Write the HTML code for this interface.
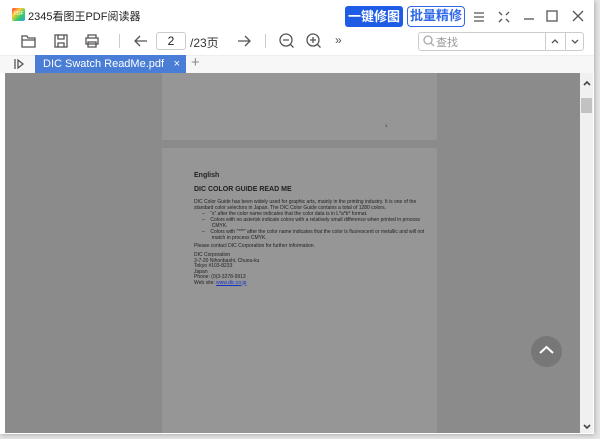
<!DOCTYPE html><html><head><style>
*{margin:0;padding:0;box-sizing:border-box}
body{width:600px;height:439px;background:#e6e6e6;font-family:"Liberation Sans","Noto Sans CJK SC",sans-serif;position:relative;overflow:hidden}
.win{position:absolute;left:0;top:0;width:594px;height:434px;background:#fff;box-shadow:1px 1px 5px rgba(0,0,0,.25)}
.a{position:absolute}
.ic{position:absolute;stroke:#555;fill:none;stroke-width:1.3}
.pg{position:absolute;background:#969696;left:162px;width:275px}
.t{position:absolute;font-size:5px;color:#222;white-space:nowrap;line-height:6px}
</style></head><body><div class="win">
<div class="a" style="left:12px;top:8px;width:13px;height:13px;background:linear-gradient(135deg,#f33,#fc3,#3c6,#39f);border-radius:2px;font-size:5px;color:#fff;text-align:center;line-height:13px">PDF</div>
<div class="a" style="left:28px;top:8px;font-size:11px;color:#222">2345看图王PDF阅读器</div>
<div class="a" style="left:345px;top:6px;width:58px;height:21px;background:#1f5ce5;border-radius:3px;color:#fff;font-size:13px;font-weight:bold;text-align:center;line-height:21px">一键修图</div>
<div class="a" style="left:407px;top:6px;width:58px;height:21px;border:1.5px solid #2f68e8;border-radius:4px;color:#2f68e8;font-size:13px;font-weight:bold;text-align:center;line-height:18px">批量精修</div>
<svg class="ic" style="left:472px;top:10px" width="14" height="14"><path d="M2 3h10M2 7h10M2 11h10"/></svg>
<svg class="ic" style="left:497px;top:10px" width="14" height="14"><path d="M2 2l3 3M12 2l-3 3M2 12l3-3M12 12l-3-3"/></svg>
<svg class="ic" style="left:522px;top:10px" width="14" height="14"><path d="M2 9h10"/></svg>
<svg class="ic" style="left:545px;top:9px" width="14" height="14"><rect x="2" y="2" width="10" height="10"/></svg>
<svg class="ic" style="left:571px;top:9px" width="14" height="14"><path d="M2 2l10 10M12 2L2 12"/></svg>
<svg class="ic" style="left:21px;top:33px" width="16" height="16"><path d="M1 3h5l1 2h7v9H1z M1 7h13"/></svg>
<svg class="ic" style="left:53px;top:33px" width="16" height="16"><rect x="2" y="2" width="12" height="12"/><path d="M5 2v4h6V2M5 14v-4h6v4"/></svg>
<svg class="ic" style="left:84px;top:33px" width="16" height="16"><path d="M4 5V2h8v3M2 5h12v6H2zM4 9h8v5H4z"/></svg>
<div class="a" style="left:119px;top:34px;width:1px;height:14px;background:#ccc"></div>
<svg class="ic" style="left:133px;top:33px" width="16" height="16"><path d="M14 8H2M7 3L2 8l5 5"/></svg>
<div class="a" style="left:156px;top:32px;width:30px;height:18px;border:1px solid #ccc;border-radius:3px;font-size:12px;text-align:center;line-height:16px;color:#222">2</div>
<div class="a" style="left:190px;top:34px;font-size:12px;color:#333">/23页</div>
<svg class="ic" style="left:236px;top:33px" width="16" height="16"><path d="M2 8h12M9 3l5 5-5 5"/></svg>
<div class="a" style="left:265px;top:34px;width:1px;height:14px;background:#ccc"></div>
<svg class="ic" style="left:278px;top:32px" width="18" height="18"><circle cx="8" cy="8" r="6"/><path d="M5 8h6M12.5 12.5l3 3"/></svg>
<svg class="ic" style="left:305px;top:32px" width="18" height="18"><circle cx="8" cy="8" r="6"/><path d="M5 8h6M8 5v6M12.5 12.5l3 3"/></svg>
<div class="a" style="left:335px;top:33px;font-size:12px;color:#555">»</div>
<div class="a" style="left:418px;top:32px;width:166px;height:19px;border:1px solid #ccc;border-radius:3px"></div>
<div class="a" style="left:545px;top:33px;width:1px;height:17px;background:#ccc"></div>
<div class="a" style="left:565px;top:33px;width:1px;height:17px;background:#ccc"></div>
<svg class="ic" style="left:423px;top:35px;stroke:#aaa" width="12" height="12"><circle cx="5" cy="5" r="4"/><path d="M8 8l3 3"/></svg>
<div class="a" style="left:436px;top:34px;font-size:11px;color:#999">查找</div>
<svg class="ic" style="left:550px;top:37px" width="10" height="8"><path d="M2 6l3-3 3 3"/></svg>
<svg class="ic" style="left:570px;top:38px" width="10" height="8"><path d="M2 2l3 3 3-3"/></svg>
<div class="a" style="left:0;top:55px;width:594px;height:18px;background:#f7f7f7;border-top:1px solid #eee"></div>
<svg class="ic" style="left:13px;top:58px" width="12" height="12"><path d="M2 1v10M5 2l5 4-5 4z"/></svg>
<div class="a" style="left:35px;top:55px;width:151px;height:18px;background:#4a7dd6;color:#fff;font-size:11px;line-height:18px;padding-left:8px">DIC Swatch ReadMe.pdf<span style="position:absolute;right:6px">×</span></div>
<div class="a" style="left:191px;top:54px;font-size:15px;color:#888">+</div>
<div class="a" style="left:5px;top:73px;width:575px;height:360px;background:#8b8b8b;overflow:hidden">
<div class="pg" style="left:157px;top:0;height:67px"><div class="t" style="left:223px;top:50px;font-size:4px">1</div></div>
<div class="pg" style="left:157px;top:75px;height:290px">
<div class="t" style="left:32px;top:25px;font-size:7px;font-weight:bold">English</div>
<div class="t" style="left:32px;top:39px;font-size:7px;font-weight:bold">DIC COLOR GUIDE READ ME</div>
<div class="t" style="left:32px;top:51px">DIC Color Guide has been widely used for graphic arts, mainly in the printing industry. It is one of the<br>standard color selectors in Japan. The DIC Color Guide contains a total of 1280 colors.</div>
<div class="t" style="left:40px;top:63px">–&nbsp;&nbsp;&nbsp;&nbsp;“s” after the color name indicates that the color data is in L*a*b* format.<br>–&nbsp;&nbsp;&nbsp;&nbsp;Colors with no asterisk indicate colors with a relatively small difference when printed in process<br>&nbsp;&nbsp;&nbsp;&nbsp;&nbsp;&nbsp;&nbsp;CMYK.<br>–&nbsp;&nbsp;&nbsp;&nbsp;Colors with “***” after the color name indicates that the color is fluorescent or metallic and will not<br>&nbsp;&nbsp;&nbsp;&nbsp;&nbsp;&nbsp;&nbsp;match in process CMYK.</div>
<div class="t" style="left:32px;top:95px">Please contact DIC Corporation for further information.</div>
<div class="t" style="left:32px;top:105px;line-height:5.5px">DIC Corporation<br>3-7-20 Nihonbashi, Chuou-ku<br>Tokyo #103-8233<br>Japan<br>Phone: (0)3-3278-9913<br>Web site: <span style="color:#13c;text-decoration:underline">www.dic.co.jp</span></div>
</div>
<div class="a" style="left:526px;top:263px;width:31px;height:31px;border-radius:50%;background:#777"><svg style="position:absolute;left:8px;top:9px" width="15" height="10"><path d="M1 8l6.5-6 6.5 6" stroke="#fff" stroke-width="2" fill="none"/></svg></div>
</div>
<div class="a" style="left:580px;top:73px;width:13px;height:360px;background:#f0f0f0"></div>
<div class="a" style="left:581px;top:98px;width:11px;height:15px;background:#c2c2c2"></div>
<svg class="ic" style="left:582px;top:79px;stroke:#444;stroke-width:1.6" width="10" height="8"><path d="M2 6l3-3 3 3"/></svg>
<svg class="ic" style="left:582px;top:423px;stroke:#444;stroke-width:1.6" width="10" height="8"><path d="M2 2l3 3 3-3"/></svg>
</div></body></html>
